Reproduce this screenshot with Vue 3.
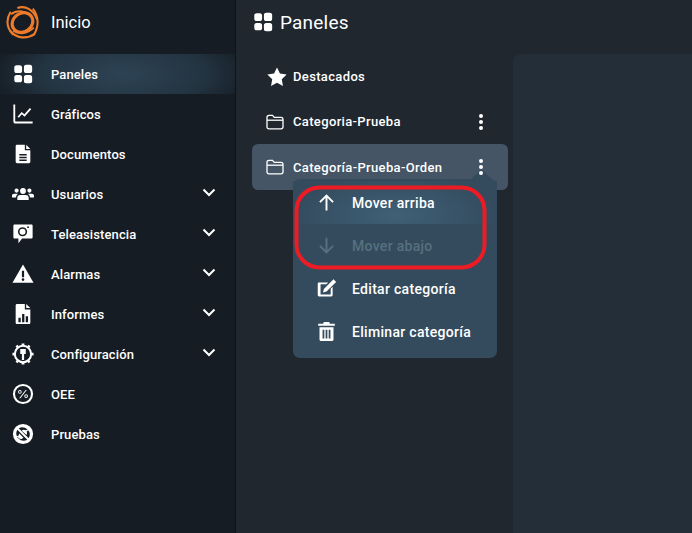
<template>
  <div class="app">
    <aside class="sidebar">
      <div class="brand">
        <svg class="logo" viewBox="0 0 32 32" fill="none" stroke="#ee7b2a">
          <ellipse cx="16" cy="16" rx="10.500" ry="9" stroke-width="3" transform="rotate(-35 16 16)" />
          <path d="M4.500 5.500C0 13 .5 21 7 28" stroke-width="2" />
          <path d="M11 2C19 -1 27 4 30 13" stroke-width="2" />
          <path d="M26 2.500C32 10 32 20 27 28" stroke-width="2" />
          <path d="M4 24C10 31.500 20 32.500 28 27" stroke-width="2.200" />
          <path d="M5 8C11 3 20 5 25 10" stroke-width="1.800" />
          <path d="M7 24C13 28 21 27 27 21" stroke-width="1.800" />
        </svg>
        <span class="brand-name">Inicio</span>
      </div>
      <nav class="nav">
        <div v-for="item in navItems" :key="item.label" class="nav-row" :class="{ active: item.active }">
          <svg class="nav-icon" viewBox="0 0 24 24" fill="#fff" fill-rule="evenodd">
            <path v-for="(d, i) in item.paths" :key="i" :d="d" />
          </svg>
          <span class="nav-label">{{ item.label }}</span>
          <svg v-if="item.sub" class="chevron" viewBox="0 0 14 9" fill="none" stroke="#fff" stroke-width="2">
            <path d="M1.500 1.500 7 7l5.500-5.500" />
          </svg>
        </div>
      </nav>
    </aside>

    <main class="panel">
      <header class="panel-head">
        <svg class="head-icon" viewBox="0 0 24 24" fill="#fff"><path :d="gridIcon" /></svg>
        <h1>Paneles</h1>
      </header>
      <div class="panel-body">
        <div class="cat-list">
          <div class="cat-row">
            <svg class="star" viewBox="0 0 24 24" fill="#fff">
              <path d="M12 1.500l3.200 6.800 7.300 1-5.300 5.200 1.300 7.400L12 18.300l-6.500 3.600 1.300-7.400L1.500 9.300l7.300-1z" />
            </svg>
            <span class="cat-label">Destacados</span>
          </div>
          <div v-for="cat in categories" :key="cat.name" class="cat-row" :class="{ selected: cat.selected }">
            <svg class="folder" viewBox="0 0 18 16" fill="none" stroke="#fff" stroke-width="1.300">
              <path d="M1 3.500C1 2 1.700 1.300 3 1.300h3.500L8.300 3.400H15C16.300 3.400 17 4.100 17 5.400v7.600c0 1.100-.7 1.800-2 1.800H3c-1.300 0-2-.7-2-1.800z" />
              <path d="M1 6.200h16" />
            </svg>
            <span class="cat-label">{{ cat.name }}</span>
            <span class="kebab"><i></i><i></i><i></i></span>
            <div v-if="cat.selected" class="menu">
              <span class="caret"></span>
              <div v-for="m in menuItems" :key="m.label" class="menu-row" :class="{ hover: m.hover, off: m.off }">
                <svg class="menu-icon" viewBox="0 0 24 24" :fill="m.stroke ? 'none' : 'currentColor'" :stroke="m.stroke ? 'currentColor' : 'none'" stroke-width="2.200" fill-rule="evenodd">
                  <path :d="m.d" />
                </svg>
                <span>{{ m.label }}</span>
              </div>
              <svg class="marker" viewBox="0 0 194 86" fill="none">
                <rect x="2.500" y="2.500" width="188" height="80" rx="23" stroke="#ed1c24" stroke-width="4" />
              </svg>
            </div>
          </div>
        </div>
        <section class="content"></section>
      </div>
    </main>
  </div>
</template>

<script setup>
const gridIcon = 'M2.500 5C2.500 3.500 3.500 2.500 5 2.500h3.500C10 2.500 11 3.500 11 5v3.500C11 10 10 11 8.500 11H5C3.500 11 2.500 10 2.500 8.500zM13 4.500c0-1.500 1-2.500 2.500-2.500h4C21 2 22 3 22 4.500v4C22 10 21 11 19.500 11h-4C14 11 13 10 13 8.500zM2.500 15.500C2.500 14 3.500 13 5 13h3.500c1.500 0 2.500 1 2.500 2.500v3c0 1.500-1 2.500-2.500 2.500H5c-1.500 0-2.500-1-2.500-2.500zM13 15.500c0-1.500 1-2.500 2.500-2.500h4c1.500 0 2.500 1 2.500 2.500v4c0 1.500-1 2.500-2.500 2.500h-4c-1.500 0-2.500-1-2.500-2.500z'

const navItems = [
  { label: 'Paneles', active: true, paths: [gridIcon] },
  {
    label: 'Gráficos',
    paths: [
      'M1.500 1.500h2v18c0 .5.300.8.800.8h18.200v2H4c-1.600 0-2.500-.9-2.500-2.500z',
      'M6 15l4.500-5.300 3 2.500 6-6.700 1.500 1.400-7.300 8-3-2.500-3.200 3.800z'
    ]
  },
  {
    label: 'Documentos',
    paths: [
      'M5.500 2H14v6h6v12.500c0 .9-.6 1.500-1.500 1.500h-13C4.600 22 4 21.400 4 20.500v-17C4 2.600 4.600 2 5.500 2zM8 12v1.500h8V12zm0 3v1.500h8V15zm0 3v1.500h8V18z',
      'M15.500 2l4.500 4.500h-4.500z'
    ]
  },
  {
    label: 'Usuarios',
    sub: true,
    paths: [
      'M12 5.500a3.200 3.200 0 1 1 0 6.400 3.200 3.200 0 0 1 0-6.400zM5 6a2.300 2.300 0 1 1 0 4.600A2.300 2.300 0 0 1 5 6zM19 6a2.300 2.300 0 1 1 0 4.600A2.300 2.300 0 0 1 19 6z',
      'M8.800 13h6.400c1.800 0 3 1.300 3 3v2.500H5.800V16c0-1.700 1.200-3 3-3zM0 14c0-1.400 1-2.300 2.400-2.300h2.800c.5 0 .9.100 1.200.3-1.200.8-2 2.200-2 3.800H0zM24 14c0-1.400-1-2.300-2.400-2.300h-2.800c-.5 0-.9.100-1.200.3 1.200.8 2 2.200 2 3.800H24z'
    ]
  },
  {
    label: 'Teleasistencia',
    sub: true,
    paths: [
      'M3 1.500h18C22 1.500 22.500 2 22.500 3v12.500c0 1-.5 1.500-1.500 1.500H11l-4 5V17H3c-1 0-1.500-.5-1.500-1.500V3C1.500 2 2 1.500 3 1.500zM11.500 4.500a5 5 0 1 0 0 10 5 5 0 0 0 0-10zm0 1.700a3.300 3.300 0 1 1 0 6.600 3.300 3.300 0 0 1 0-6.600zM17.500 3.500a1 1 0 1 0 0 2 1 1 0 0 0 0-2z'
    ]
  },
  {
    label: 'Alarmas',
    sub: true,
    paths: ['M12 1.500L23.500 21.500H.5zM10.800 8.500v7h2.400v-7zm1.200 8a1.500 1.500 0 1 0 0 3 1.500 1.500 0 0 0 0-3z']
  },
  {
    label: 'Informes',
    sub: true,
    paths: [
      'M5.500 1H14v6h6v14.500c0 .9-.6 1.500-1.500 1.500h-13C4.600 23 4 22.400 4 21.500v-19C4 1.600 4.600 1 5.500 1zM7 16v5h2.500v-5zm4-4v9h2.500v-9zm4 2.500V21h2.500v-6.500z',
      'M15.500 1l4.500 4.500h-4.500z'
    ]
  },
  {
    label: 'Configuración',
    sub: true,
    paths: [
      'M12 2a10 10 0 1 1 0 20 10 10 0 0 1 0-20zm0 2.200a7.800 7.800 0 1 0 0 15.600 7.800 7.800 0 0 0 0-15.600z',
      'M10.500 .5h3v3h-3zM10.500 20.500h3v3h-3zM.5 10.500h2.500v3H.5zM21 10.500h2.500v3H21zM3.800 3.800l2-2L7.500 3.500l-2 2zM20.200 3.800l-2-2L16.500 3.500l2 2zM3.800 20.200l2 2 1.700-1.700-2-2zM20.200 20.200l-2 2-1.700-1.700 2-2z',
      'M9 6.500h6v5.500h-1.800v6.500h-2.400V12H9z'
    ]
  },
  {
    label: 'OEE',
    paths: [
      'M12 1a11 11 0 1 1 0 22 11 11 0 0 1 0-22zm0 2.300a8.700 8.700 0 1 0 0 17.400 8.700 8.700 0 0 0 0-17.400z',
      'M14.800 7.500h1.300L9.200 16.500H7.900zM8.600 7.700a2 2 0 1 1 0 4 2 2 0 0 1 0-4zm0 1a1 1 0 1 0 0 2 1 1 0 0 0 0-2zM15.400 12.300a2 2 0 1 1 0 4 2 2 0 0 1 0-4zm0 1a1 1 0 1 0 0 2 1 1 0 0 0 0-2z'
    ]
  },
  {
    label: 'Pruebas',
    paths: [
      'M12 1a11 11 0 1 1 0 22 11 11 0 0 1 0-22zM5.800 7.300A8 8 0 0 0 16.700 18.200zM7.300 5.800l10.900 10.900A8 8 0 0 0 7.300 5.800z',
      'M8 11.500l4.500 4.500-2 1.500c-1.500 0-3.500-.8-4-2.300L5 15l.5-1 1.200.5zM10.500 8.500c1.200-1.300 3-1.500 4.500-.5l2-1 .7 1-1.700 1.300c.6 1.200.6 2.600 0 3.700z'
    ]
  }
]

const categories = [
  { name: 'Categoria-Prueba' },
  { name: 'Categoría-Prueba-Orden', selected: true }
]

const menuItems = [
  { label: 'Mover arriba', hover: true, stroke: true, d: 'M12 21V4M4.500 11.500 12 4l7.500 7.500' },
  { label: 'Mover abajo', off: true, stroke: true, d: 'M12 3v17M4.500 12.500 12 20l7.500-7.500' },
  {
    label: 'Editar categoría',
    d: 'M3.500 5H14l-2.200 2.200H5.200v11.600h11.600v-6.500L19 10v9.500c0 1-.6 1.500-1.500 1.500h-14C2.500 21 2 20.500 2 19.500v-13C2 5.500 2.500 5 3.500 5zM20 1.500l3 3L12 15.500l-4 1 1-4z'
  },
  {
    label: 'Eliminar categoría',
    d: 'M9 1h6L16 3h5.500v2.500h-19V3H8zM4 7h16v14c0 1-.8 1.800-1.800 1.800H5.800C4.800 22.800 4 22 4 21zM7.500 10v10h2V10zm3.500 0v10h2V10zm3.500 0v10h2V10z'
  }
]
</script>

<style>
html, body { margin: 0; background: #20272f; }
</style>

<style scoped>
.app {
  display: flex;
  width: 692px;
  height: 533px;
  overflow: hidden;
  font-family: Roboto, "Liberation Sans", sans-serif;
  color: #fff;
  background: #20272f;
}

.sidebar {
  flex: 0 0 235px;
  background: #151c24;
  border-right: 1px solid #0e1318;
}

.brand {
  display: flex;
  align-items: center;
  height: 54px;
  padding: 0 0 9px 6px;
  box-sizing: border-box;
}

.logo {
  width: 33px;
  height: 33px;
  margin-right: 12px;
}

.brand-name {
  font-size: 16.500px;
}

.nav-row {
  display: flex;
  align-items: center;
  height: 40px;
  padding: 0 19px 0 12px;
}

.nav-row.active {
  background: radial-gradient(ellipse 58% 130% at 52% 50%, #2d4354 0%, #233441 60%, #151c24 100%);
}

.nav-icon {
  width: 22px;
  height: 22px;
  margin-right: 17px;
}

.nav-label {
  flex: 1;
  font-size: 13px;
  font-weight: 500;
  letter-spacing: 0.1px;
}

.chevron {
  width: 14px;
  height: 9px;
  margin-top: -3px;
}

.panel {
  flex: 1;
  min-width: 0;
}

.panel-head {
  display: flex;
  align-items: center;
  height: 54px;
  padding: 0 0 10px 16px;
  box-sizing: border-box;
}

.head-icon {
  width: 22px;
  height: 22px;
  margin-right: 6px;
}

h1 {
  margin: 0;
  font-size: 19px;
  font-weight: 400;
  letter-spacing: 0.2px;
}

.panel-body {
  display: flex;
}

.cat-list {
  width: 256px;
  margin-left: 16px;
}

.cat-row {
  position: relative;
  display: flex;
  align-items: center;
  height: 45px;
  padding: 0 25px 0 14px;
  border-radius: 6px;
}

.cat-row.selected {
  height: 46px;
  background: #455565;
}

.star {
  width: 22px;
  height: 22px;
  margin-right: 5px;
}

.folder {
  width: 18px;
  height: 16px;
  margin-right: 9px;
}

.cat-label {
  flex: 1;
  font-size: 13px;
  font-weight: 500;
  letter-spacing: 0.35px;
}

.kebab {
  position: relative;
  z-index: 3;
  display: flex;
  flex-direction: column;
  gap: 2px;
}

.kebab i {
  display: block;
  width: 4px;
  height: 4px;
  border-radius: 50%;
  background: #fff;
}

.menu {
  position: absolute;
  z-index: 2;
  left: 41px;
  top: 35px;
  width: 204px;
  height: 179px;
  padding: 2px 0 5px;
  box-sizing: border-box;
  border-radius: 7px;
  background: #344b5e;
}

.caret {
  position: absolute;
  right: 8px;
  top: -7px;
  width: 15px;
  height: 15px;
  background: #344b5e;
  transform: rotate(45deg);
  border-radius: 2px;
  z-index: -1;
}

.menu-row {
  display: flex;
  align-items: center;
  height: 43px;
  padding-left: 23px;
  font-size: 14px;
  font-weight: 500;
  letter-spacing: 0.3px;
}

.menu-row.hover {
  background: radial-gradient(ellipse 50% 100% at 50% 80%, #3f6076 0%, #344b5e 100%);
}

.menu-row.off {
  color: #56707f;
}

.menu-icon {
  width: 21px;
  height: 21px;
  margin-right: 15px;
}

.marker {
  position: absolute;
  left: 1px;
  top: 6px;
  width: 194px;
  height: 86px;
}

.content {
  flex: 1;
  height: 479px;
  margin-left: 5px;
  background: #232e39;
  border-top-left-radius: 8px;
}
</style>
